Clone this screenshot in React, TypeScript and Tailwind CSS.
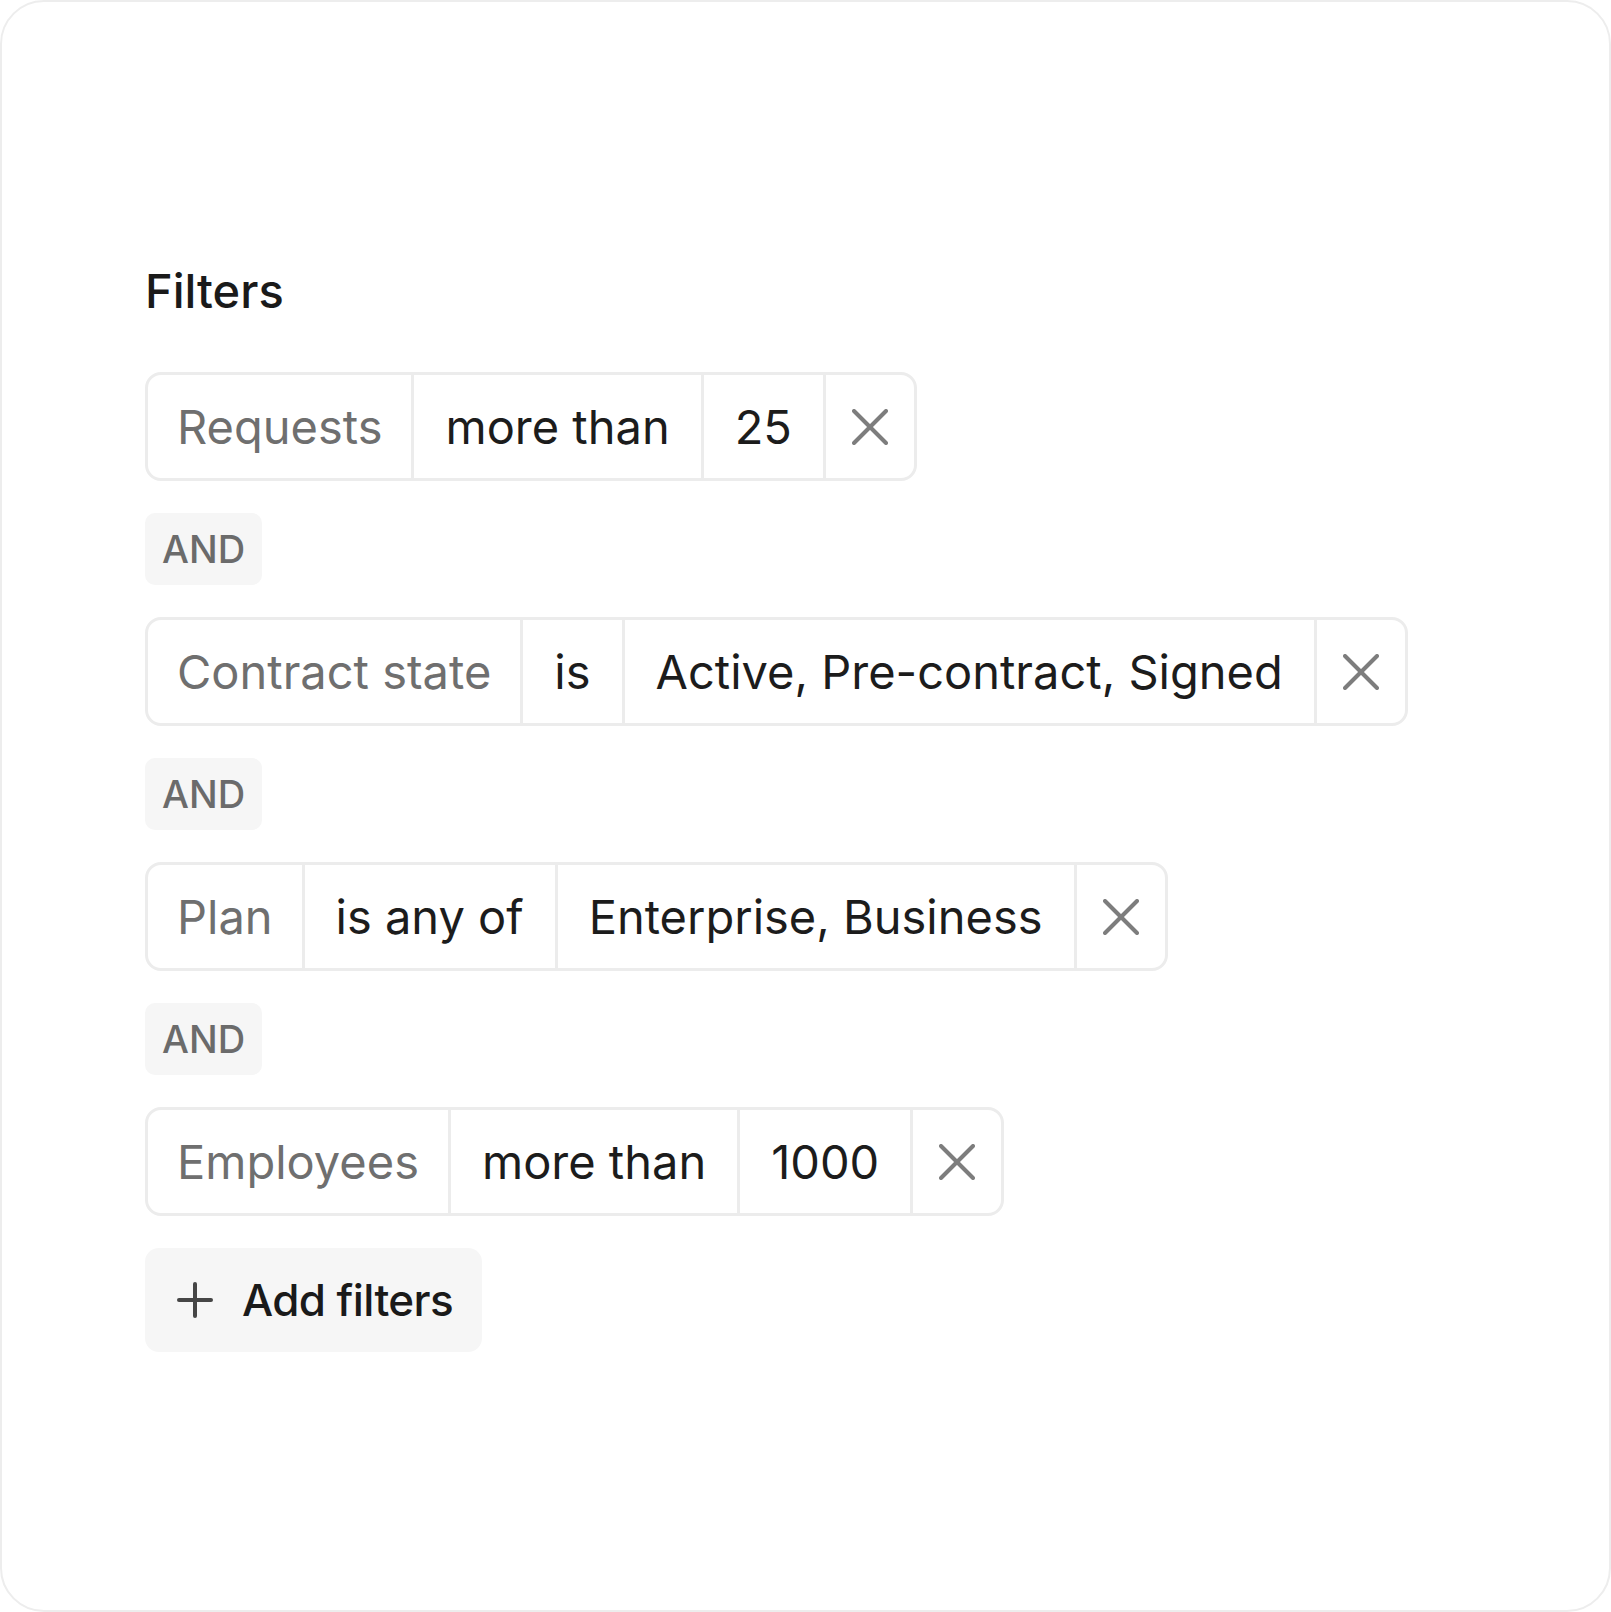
import React from "react";

type Filter = {
  field: string;
  op: string;
  value: string;
};

const filters: Filter[] = [
  { field: "Requests", op: "more than", value: "25" },
  { field: "Contract state", op: "is", value: "Active, Pre-contract, Signed" },
  { field: "Plan", op: "is any of", value: "Enterprise, Business" },
  { field: "Employees", op: "more than", value: "1000" },
];

const XIcon = () => (
  <svg width="36" height="36" viewBox="0 0 36 36" fill="none" stroke="#7d7d7d" strokeWidth="4" strokeLinecap="round">
    <line x1="2" y1="2" x2="34" y2="34" />
    <line x1="34" y1="2" x2="2" y2="34" />
  </svg>
);

const PlusIcon = () => (
  <svg width="36" height="36" viewBox="0 0 36 36" fill="none" stroke="#464646" strokeWidth="4" strokeLinecap="round">
    <line x1="2" y1="18" x2="34" y2="18" />
    <line x1="18" y1="2" x2="18" y2="34" />
  </svg>
);

const FilterChip = ({ filter }: { filter: Filter }) => (
  <div className="flex h-[109px] self-start rounded-[16px] border-[3px] border-[#ececec] divide-x-[3px] divide-[#ececec] bg-white">
    <div className="flex items-center px-[29px] text-[#6f6f6f]">{filter.field}</div>
    <div className="flex items-center px-[31px] text-[#1c1c1c]">{filter.op}</div>
    <div className="flex items-center px-[31px] text-[#1c1c1c]">{filter.value}</div>
    <div className="flex items-center px-[26px]">
      <XIcon />
    </div>
  </div>
);

const AndBadge = () => (
  <div className="flex h-[72px] items-center self-start rounded-[10px] bg-[#f6f6f6] px-[17px] text-[38px] font-medium leading-none text-[#6b6b6b]">
    AND
  </div>
);

export default function App() {
  return (
    <div
      className="h-[1612px] w-full rounded-[44px] border-2 border-[#ededed] bg-white pl-[143px] pt-[265px]"
      style={{ fontFamily: "Inter, 'Noto Sans', sans-serif" }}
    >
      <h1 className="text-[47px] font-medium leading-none text-[#1a1a1a]">Filters</h1>
      <div className="mt-[58px] flex flex-col gap-8 text-[47px] leading-none">
        {filters.map((f, i) => (
          <React.Fragment key={f.field}>
            {i > 0 && <AndBadge />}
            <FilterChip filter={f} />
          </React.Fragment>
        ))}
        <button className="flex h-[104px] items-center gap-[29px] self-start rounded-[14px] bg-[#f6f6f6] pl-8 pr-[29px] text-[44px] font-medium tracking-[-0.6px] text-[#1a1a1a]">
          <PlusIcon />
          Add filters
        </button>
      </div>
    </div>
  );
}
